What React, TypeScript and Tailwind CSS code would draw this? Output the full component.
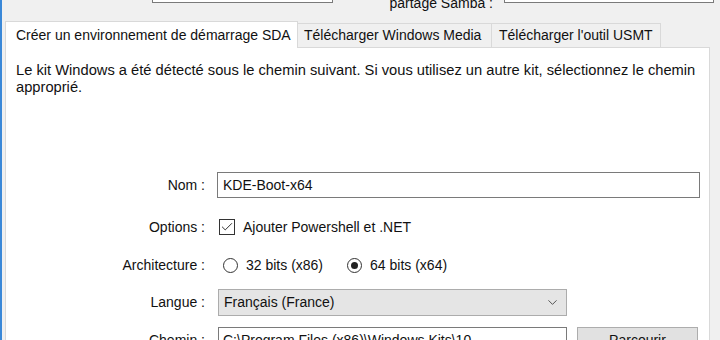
import { Check, ChevronDown } from "lucide-react";

const font = { fontFamily: '"Liberation Sans", Arial, sans-serif' };

function Row({ label, className, children }: { label: string; className?: string; children: React.ReactNode }) {
  return (
    <div className={`flex items-center ${className ?? ""}`}>
      <span className="w-[199px] shrink-0 text-right">{label}</span>
      <div className="ml-[12px] flex items-center">{children}</div>
    </div>
  );
}

function Radio({ checked, label }: { checked?: boolean; label: string }) {
  return (
    <label className="flex items-center gap-[8px]">
      <span className="flex h-[15px] w-[15px] items-center justify-center rounded-full border border-[#333] bg-white">
        {checked && <span className="h-[7px] w-[7px] rounded-full bg-[#222]" />}
      </span>
      {label}
    </label>
  );
}

export default function App() {
  return (
    <div
      style={font}
      className="flex h-[340px] w-[720px] overflow-hidden border-l-2 border-[#3a88d8] bg-[#f0f0f0] text-[14px] text-[#111]"
    >
      <div className="flex flex-col pl-[3px]">
        {/* previous row, mostly scrolled out of view */}
        <div className="-mt-[21px] flex h-[25px] items-start">
          <div className="ml-[147px] h-[24px] w-[181px] shrink-0 border border-[#7a7a7a] bg-white" />
          <span className="mt-[16px] w-[160px] shrink-0 text-right leading-[16px]">partage Samba :</span>
          <div className="ml-[11px] h-[24px] w-[210px] shrink-0 border border-[#7a7a7a] bg-white" />
        </div>

        {/* tabs */}
        <div className="relative z-10 mt-[17px] flex items-end">
          <div className="-mb-px flex h-[27px] w-[293px] items-center border border-b-0 border-[#d9d9d9] bg-white pl-[10px]">
            Créer un environnement de démarrage SDA
          </div>
          <div className="flex h-[24px] w-[194px] items-center border border-l-0 border-b-0 border-[#d9d9d9] bg-[#f0f0f0] pl-[6px]">
            Télécharger Windows Media
          </div>
          <div className="flex h-[24px] w-[169px] items-center border border-l-0 border-b-0 border-[#d9d9d9] bg-[#f0f0f0] pl-[7px]">
            Télécharger l'outil USMT
          </div>
        </div>

        {/* panel */}
        <div className="h-[300px] w-[705px] border border-[#d9d9d9] bg-white">
          <p className="pl-[10px] pr-[4px] pt-[14px] text-[14.7px] leading-[17px]">
            Le kit Windows a été détecté sous le chemin suivant. Si vous utilisez un autre kit, sélectionnez le chemin
            approprié.
          </p>

          <Row label="Nom :" className="mt-[76px]">
            <div className="flex h-[26px] w-[483px] items-center border border-[#7a7a7a] bg-white pl-[5px]">
              KDE-Boot-x64
            </div>
          </Row>

          <Row label="Options :" className="mt-[16px] h-[26px]">
            <label className="flex items-center gap-[8px]">
              <span className="ml-[2px] flex h-[16px] w-[16px] items-center justify-center border border-[#333] bg-white">
                <Check size={14} strokeWidth={1.6} className="text-[#222]" />
              </span>
              Ajouter Powershell et .NET
            </label>
          </Row>

          <Row label="Architecture :" className="mt-[12px] h-[26px]">
            <div className="ml-[6px] flex items-center gap-[24px]">
              <Radio label="32 bits (x86)" />
              <Radio checked label="64 bits (x64)" />
            </div>
          </Row>

          <Row label="Langue :" className="mt-[11px]">
            <div className="ml-px flex h-[27px] w-[349px] items-center justify-between border border-[#acacac] bg-[#e5e5e5] pl-[5px] pr-[6px]">
              Français (France)
              <ChevronDown size={15} strokeWidth={1.3} className="text-[#333]" />
            </div>
          </Row>

          <Row label="Chemin :" className="mt-[11px]">
            <div className="ml-px flex h-[26px] w-[349px] items-center border border-[#7a7a7a] bg-white pl-[4px]">
              C:\Program Files (x86)\Windows Kits\10
            </div>
            <button className="ml-[10px] h-[26px] w-[121px] border border-[#adadad] bg-[#e1e1e1]">Parcourir</button>
          </Row>
        </div>
      </div>
    </div>
  );
}
